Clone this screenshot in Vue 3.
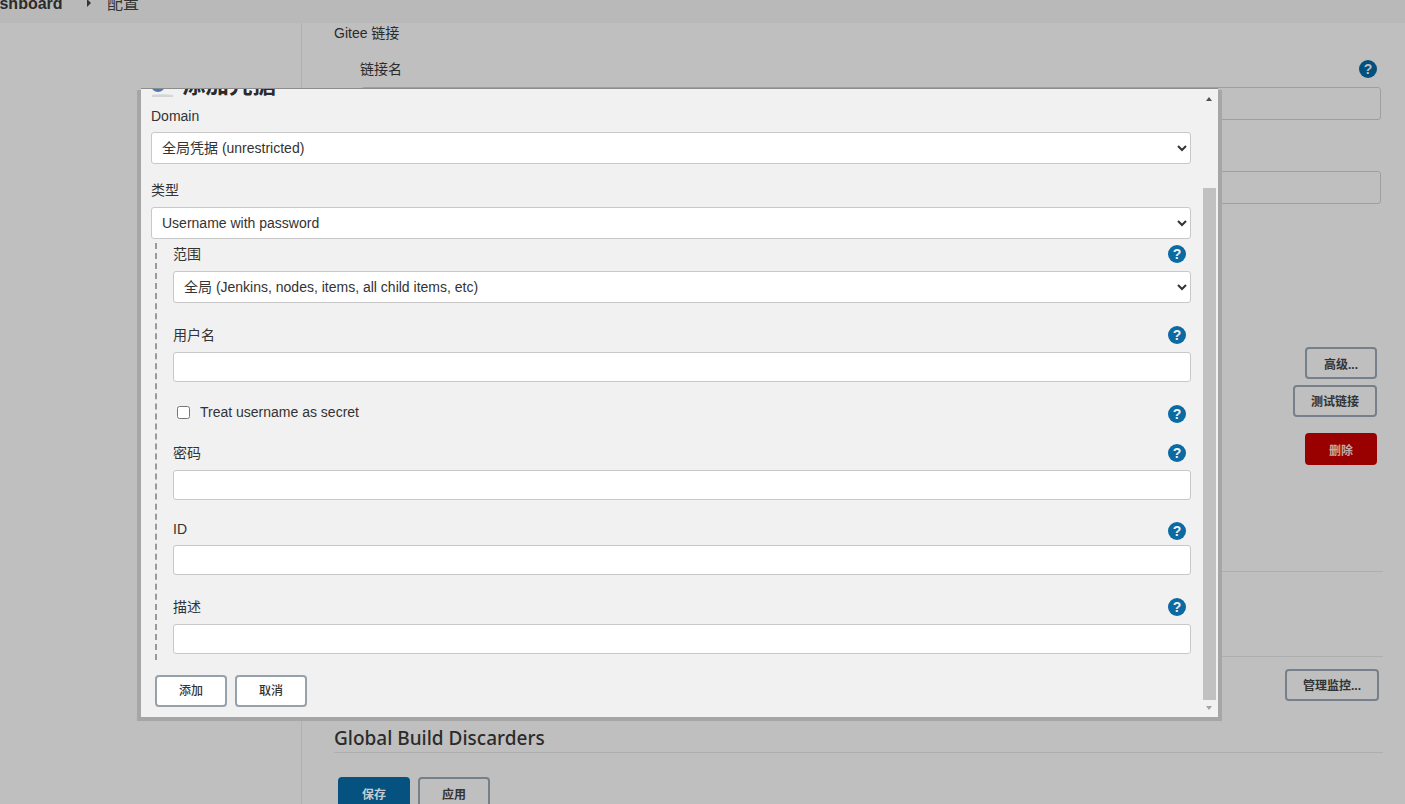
<script setup>
const domains = ['全局凭据 (unrestricted)']
const kinds = ['Username with password']
const scopes = ['全局 (Jenkins, nodes, items, all child items, etc)']
</script>

<template>
  <div class="page">
    <header class="crumbs">
      <span class="crumb-home">Dashboard</span>
      <span class="crumb-arrow"></span>
      <span class="crumb-current">配置</span>
    </header>

    <div class="main">
      <aside class="side"></aside>
      <section class="content">
        <div class="section-name">Gitee 链接</div>
        <div class="bg-label-row">
          <span>链接名</span>
          <span class="help help-dim">?</span>
        </div>
        <div class="bg-input"></div>
        <div class="bg-input bg-input-second"></div>

        <div class="bg-actions">
          <button class="btn-bg btn-advanced">高级...</button>
          <button class="btn-bg btn-test">测试链接</button>
          <button class="btn-bg btn-delete">删除</button>
        </div>

        <hr class="rule rule-a" />
        <hr class="rule rule-b" />
        <div class="monitor-row"><button class="btn-bg btn-monitor">管理监控...</button></div>

        <h2 class="discard-title">Global Build Discarders</h2>
        <hr class="rule rule-c" />
        <div class="save-row">
          <button class="btn-bg btn-save">保存</button>
          <button class="btn-bg btn-apply">应用</button>
        </div>
      </section>
    </div>

    <div class="dialog-shadow">
      <div class="dialog">
        <div class="dialog-title">
          <svg class="title-icon" viewBox="0 0 24 30" width="24" height="30">
            <circle cx="7" cy="15" r="7" fill="#4a78b8" />
            <path d="M1 25c5-1 15-1 21 0v2H1z" fill="#d5d5d5" />
          </svg>
          <span>添加凭据</span>
        </div>

        <label class="label">Domain</label>
        <select class="control select-first">
          <option v-for="d in domains" :key="d">{{ d }}</option>
        </select>

        <label class="label label-kind">类型</label>
        <select class="control select-kind">
          <option v-for="k in kinds" :key="k">{{ k }}</option>
        </select>

        <div class="nested">
          <div class="field-head"><span>范围</span><span class="help">?</span></div>
          <select class="control control-gap">
            <option v-for="s in scopes" :key="s">{{ s }}</option>
          </select>

          <div class="field-head head-user"><span>用户名</span><span class="help">?</span></div>
          <input class="control input control-gap" />

          <div class="field-head head-secret">
            <label class="check"><input type="checkbox" /><span>Treat username as secret</span></label>
            <span class="help help-low">?</span>
          </div>

          <div class="field-head head-pass"><span>密码</span><span class="help">?</span></div>
          <input class="control input control-gap" />

          <div class="field-head head-id"><span>ID</span><span class="help help-low">?</span></div>
          <input class="control input control-gap-small" />

          <div class="field-head head-desc"><span>描述</span><span class="help">?</span></div>
          <input class="control input control-gap" />
        </div>

        <div class="dialog-actions">
          <button class="btn-light">添加</button>
          <button class="btn-light">取消</button>
        </div>

        <div class="scrollbar">
          <span class="arrow-up"></span>
          <span class="thumb"></span>
          <span class="arrow-down"></span>
        </div>
      </div>
    </div>
  </div>
</template>

<style>
html, body { margin: 0; padding: 0; overflow: hidden; }
</style>

<style scoped>
.page {
  position: relative;
  width: 1405px;
  height: 804px;
  overflow: hidden;
  background: #bfbfbf;
  color: #2b2b2b;
  font-family: "Liberation Sans", "Noto Sans CJK SC", sans-serif;
  font-size: 14px;
}
.crumbs {
  height: 23px;
  background: #b9b9b9;
  display: flex;
  align-items: flex-start;
  overflow: hidden;
}
.crumb-home {
  margin: -6px 0 0 -21px;
  font-weight: 700;
  font-size: 16px;
  line-height: 20px;
  width: 108px;
  flex: none;
  color: #2c2c2c;
}
.crumb-arrow {
  width: 0;
  height: 0;
  margin-top: -1px;
  border-left: 4px solid #333;
  border-top: 4px solid transparent;
  border-bottom: 4px solid transparent;
}
.crumb-current {
  margin: -6px 0 0 16px;
  font-size: 16px;
  line-height: 20px;
  color: #333;
}
.main { display: flex; }
.side {
  width: 301px;
  height: 781px;
  border-right: 1px solid #b1b1b1;
  flex: none;
}
.content {
  width: 1049px;
  margin-left: 32px;
  flex: none;
}
.section-name { line-height: 20px; height: 20px; font-size: 14px; }
.bg-label-row {
  margin: 16px 6px 0 26px;
  height: 20px;
  line-height: 20px;
  display: flex;
  justify-content: space-between;
  align-items: center;
}
.bg-input {
  box-sizing: border-box;
  margin: 8px 2px 0 27px;
  height: 33px;
  border: 1px solid #9f9f9f;
  border-radius: 3px;
}
.bg-input-second { margin-top: 51px; }
.bg-actions {
  margin-top: 143px;
  padding-right: 6px;
  display: flex;
  flex-direction: column;
  align-items: flex-end;
}
.btn-bg {
  box-sizing: border-box;
  height: 32px;
  border: 2px solid #76808a;
  border-radius: 4px;
  background: transparent;
  color: #333;
  font: 700 12px "Liberation Sans", "Noto Sans CJK SC", sans-serif;
  padding: 0 0 2px;
}
.btn-advanced { width: 72px; padding-bottom: 0; }
.btn-test { width: 84px; margin-top: 6px; }
.btn-delete {
  width: 72px;
  margin-top: 16px;
  padding-bottom: 0;
  background: #990000;
  border-color: #990000;
  color: #c4a8a8;
}
.rule { margin: 0; border: 0; height: 1px; background: #aeaeae; }
.rule-a { margin-top: 106px; }
.rule-b { margin-top: 84px; }
.monitor-row {
  margin-top: 12px;
  padding-right: 4px;
  display: flex;
  justify-content: flex-end;
}
.btn-monitor { width: 94px; }
.discard-title {
  margin: 25px 0 0;
  font: 500 19px/24px "Noto Sans", sans-serif;
  color: #2b2b2b;
}
.rule-c { margin-top: 2px; }
.save-row {
  margin: 24px 0 0 4px;
  display: flex;
  gap: 8px;
}
.btn-save,
.btn-apply { width: 72px; height: 34px; }
.btn-save { background: #05517f; border-color: #05517f; color: #c4ccd2; }

.help {
  flex: none;
  width: 18px;
  height: 18px;
  border-radius: 50%;
  background: #0b6aa2;
  color: #f0f0f0;
  font: 700 14px/18px "Liberation Sans", sans-serif;
  text-align: center;
}
.help-dim { background: #02507f; color: #bfbfbf; }
.help-low { position: relative; top: 2px; }

.dialog-shadow {
  position: absolute;
  left: 137px;
  top: 90px;
  padding: 0 4px 4px;
  background: #a6a6a6;
}
.dialog {
  position: relative;
  box-sizing: border-box;
  width: 1077px;
  height: 629px;
  margin-top: -2px;
  padding: 0 27px 0 10px;
  border-top: 1px solid #8c8c8c;
  background: #f1f1f1;
  overflow: hidden;
}
.dialog-title {
  display: flex;
  align-items: center;
  gap: 7px;
  height: 30px;
  margin: -19px 0 6px;
  font: 700 23.5px/30px "Liberation Sans", "Noto Sans CJK SC", sans-serif;
  color: #2b2b2b;
}
.title-icon { flex: none; }
.label { display: block; line-height: 20px; height: 20px; color: #333; }
.control {
  box-sizing: border-box;
  display: block;
  width: 100%;
  background: #fff;
  border: 1px solid #c8c8c8;
  border-radius: 3px;
  color: #333;
  font: 14px "Liberation Sans", "Noto Sans CJK SC", sans-serif;
  height: 32px;
  padding: 0 6px;
}
.input { height: 30px; }
.select-first { margin-top: 6px; }
.label-kind { margin-top: 16px; }
.select-kind { margin-top: 7px; }
.nested {
  margin: 4px 0 0 4px;
  padding: 1px 0 6px 16px;
  border-left: 2px dashed #9a9a9a;
}
.field-head {
  display: flex;
  justify-content: space-between;
  align-items: center;
  height: 20px;
  line-height: 20px;
  padding-right: 5px;
  color: #333;
}
.control-gap { margin-top: 7px; }
.control-gap-small { margin-top: 6px; }
.head-user { margin-top: 22px; }
.head-secret { margin-top: 20px; }
.head-pass { margin-top: 21px; }
.head-id { margin-top: 19px; }
.head-desc { margin-top: 22px; }
.check { display: flex; align-items: center; gap: 10px; padding-left: 4px; }
.check input { margin: 0; width: 13px; height: 13px; }
.dialog-actions {
  margin: 15px 0 0 4px;
  display: flex;
  gap: 8px;
}
.btn-light {
  box-sizing: border-box;
  width: 72px;
  height: 32px;
  padding: 0 0 4px;
  background: #fff;
  border: 2px solid #95a1ab;
  border-radius: 4px;
  color: #333;
  font: 500 12px "Liberation Sans", "Noto Sans CJK SC", sans-serif;
}
.scrollbar {
  position: absolute;
  top: 0;
  bottom: 0;
  right: 2px;
  width: 13px;
}
.thumb {
  position: absolute;
  top: 99px;
  left: 0;
  width: 13px;
  height: 512px;
  background: #c1c1c1;
}
.arrow-up,
.arrow-down {
  position: absolute;
  left: 3px;
  width: 0;
  height: 0;
  border-left: 3.5px solid transparent;
  border-right: 3.5px solid transparent;
}
.arrow-up { top: 8px; border-bottom: 4px solid #505050; }
.arrow-down { top: 617px; border-top: 4px solid #a3a3a3; }
</style>
